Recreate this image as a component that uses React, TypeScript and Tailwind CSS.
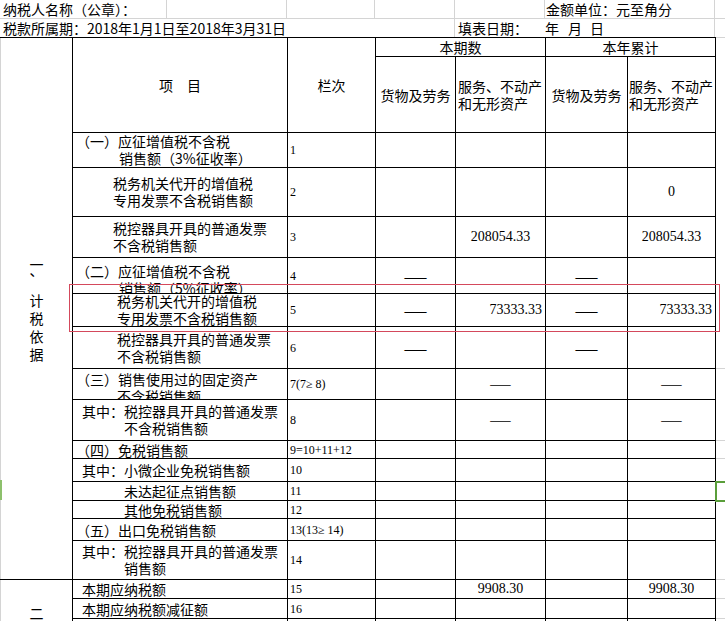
import React from "react"

const cjk = "font-['Noto_Sans_CJK_SC',sans-serif]"
const num = "font-['Liberation_Serif','Noto_Sans_CJK_SC',serif]"
const cell = "border border-black p-0 align-middle"

type Val = { t: string; kind: "num" | "right" | "dash" | "dash2" }

type Row = {
  h: string
  lines: [string, string][]
  box?: string
  no: string
  d?: Val
  e?: Val
  f?: Val
  g?: Val
  grid?: boolean
}

const dash: Val = { t: "——", kind: "dash" }
const dash2: Val = { t: "——", kind: "dash2" }

const rows: Row[] = [
  { h: "h-[35px]", lines: [["（一）应征增值税不含税", "pl-[3px]"], ["销售额（3%征收率）", "pl-[46px]"]], no: "1" },
  { h: "h-[49px]", lines: [["税务机关代开的增值税", "pl-[40px]"], ["专用发票不含税销售额", "pl-[40px]"]], no: "2", g: { t: "0", kind: "num" } },
  { h: "h-[41px]", lines: [["税控器具开具的普通发票", "pl-[40px]"], ["不含税销售额", "pl-[40px]"]], no: "3", e: { t: "208054.33", kind: "num" }, g: { t: "208054.33", kind: "num" } },
  { h: "h-[36px]", box: "h-[34px] pt-[4px] overflow-hidden", lines: [["（二）应征增值税不含税", "pl-[3px]"], ["销售额（5%征收率）", "pl-[46px]"]], no: "4", d: dash, f: dash },
  { h: "h-[33px]", box: "h-[31px] flex flex-col justify-center", lines: [["税务机关代开的增值税", "pl-[44px]"], ["专用发票不含税销售额", "pl-[44px]"]], no: "5", d: dash, e: { t: "73333.33", kind: "right" }, f: dash, g: { t: "73333.33", kind: "right" } },
  { h: "h-[42px]", lines: [["税控器具开具的普通发票", "pl-[44px]"], ["不含税销售额", "pl-[44px]"]], no: "6", d: dash, f: dash, grid: true },
  { h: "h-[31px]", box: "h-[29px] pt-[1px] overflow-hidden", lines: [["（三）销售使用过的固定资产", "pl-[3px]"], ["不含税销售额", "pl-[44px]"]], no: "7(7≥ 8)", e: dash2, g: dash2 },
  { h: "h-[41px]", lines: [["其中：税控器具开具的普通发票", "pl-[9px]"], ["不含税销售额", "pl-[51px]"]], no: "8", e: dash2, g: dash2, grid: true },
  { h: "h-[18px]", lines: [["（四）免税销售额", "pl-[3px]"]], no: "9=10+11+12", grid: true },
  { h: "h-[23px]", lines: [["其中：小微企业免税销售额", "pl-[9px]"]], no: "10" },
  { h: "h-[19px]", lines: [["未达起征点销售额", "pl-[51px]"]], no: "11" },
  { h: "h-[18px]", lines: [["其他免税销售额", "pl-[51px]"]], no: "12" },
  { h: "h-[22px]", lines: [["（五）出口免税销售额", "pl-[3px]"]], no: "13(13≥ 14)" },
  { h: "h-[39px]", lines: [["其中：税控器具开具的普通发票", "pl-[9px]"], ["销售额", "pl-[51px]"]], no: "14", grid: true },
]

const tail: Row[] = [
  { h: "h-[19px]", lines: [["本期应纳税额", "pl-[9px]"]], no: "15", e: { t: "9908.30", kind: "num" }, g: { t: "9908.30", kind: "num" }, grid: true },
  { h: "h-[20px]", lines: [["本期应纳税额减征额", "pl-[9px]"]], no: "16", grid: true },
  { h: "h-[21px]", lines: [], no: "" },
]

function ValueCell({ v }: { v?: Val }) {
  if (!v) return <td className={cell}></td>
  if (v.kind === "dash") return <td className={`${cell} text-center`}>——</td>
  if (v.kind === "dash2")
    return <td className={`${cell} text-center text-[13px] tracking-[2px] pl-[2px]`}>——</td>
  return (
    <td className={`${cell} ${num} text-[14px] ${v.kind === "right" ? "text-right pr-[3px]" : "text-center"}`}>
      {v.t}
    </td>
  )
}

function DataCells({ r }: { r: Row }) {
  const two = r.lines.length > 1
  return (
    <>
      <td className={cell}>
        <div className={`${r.box ?? ""} ${two ? "leading-[17px]" : ""} whitespace-nowrap`}>
          {r.lines.map(([t, pl], i) => (
            <div key={i} className={pl}>{t}</div>
          ))}
        </div>
      </td>
      <td className={`${cell} ${num} text-[12px] pl-[2px] whitespace-nowrap`}>{r.no}</td>
      <ValueCell v={r.d} />
      <ValueCell v={r.e} />
      <ValueCell v={r.f} />
      <ValueCell v={r.g} />
      <td className={`p-0 ${r.grid ? "border-b border-b-[#d4d4d4]" : ""}`}></td>
    </>
  )
}

export default function App() {
  const side = ["一", "、", "计", "税", "依", "据"]
  return (
    <div className={`relative w-[725px] h-[621px] overflow-hidden bg-white text-black text-[14px] ${cjk}`}>
      <div className="flex h-[19px] border-b border-[#d4d4d4] leading-[16px]">
        <div className="w-[167px] shrink-0 border-r border-[#d4d4d4] flex items-center pl-[3px] whitespace-nowrap">纳税人名称（公章）：</div>
        <div className="w-[120px] shrink-0 border-r border-[#d4d4d4]"></div>
        <div className="w-[88px] shrink-0 border-r border-[#d4d4d4]"></div>
        <div className="w-[80px] shrink-0 border-r border-[#d4d4d4]"></div>
        <div className="w-[90px] shrink-0 border-r border-[#d4d4d4]"></div>
        <div className="w-[170px] shrink-0 border-r border-[#d4d4d4] flex items-center pl-[1px] whitespace-nowrap">金额单位：元至角分</div>
        <div className="flex-1"></div>
      </div>
      <div className="flex h-[18px] leading-[16px]">
        <div className="w-[455px] shrink-0 border-r border-[#d4d4d4] flex items-center pl-[3px] whitespace-nowrap">税款所属期：2018年1月1日至2018年3月31日</div>
        <div className="w-[260px] shrink-0 border-r border-[#d4d4d4] flex items-center pl-[3px] whitespace-nowrap">
          <span>填表日期：</span>
          <span className="ml-[17px]">年</span>
          <span className="ml-[9px]">月</span>
          <span className="ml-[8px]">日</span>
        </div>
        <div className="flex-1"></div>
      </div>

      <table className="border-collapse table-fixed w-[755px] leading-[16px]">
        <colgroup>
          <col className="w-[72px]" />
          <col className="w-[215px]" />
          <col className="w-[88px]" />
          <col className="w-[80px]" />
          <col className="w-[90px]" />
          <col className="w-[82px]" />
          <col className="w-[88px]" />
          <col className="w-[40px]" />
        </colgroup>
        <tbody>
          <tr className="h-[19px]">
            <td rowSpan={16} className={`${cell} border-l-[#d4d4d4]`}>
              <div className="flex flex-col items-center">
                {side.map((c, i) => (
                  <span key={i} className="block h-[18px] leading-[18px]">
                    {c === "、" ? <span className="inline-block -translate-y-[12px]">{c}</span> : c}
                  </span>
                ))}
              </div>
            </td>
            <td rowSpan={2} className={`${cell} text-center`}>项　目</td>
            <td rowSpan={2} className={`${cell} text-center`}>栏次</td>
            <td colSpan={2} className={`${cell} text-center`}>本期数</td>
            <td colSpan={2} className={`${cell} text-center`}>本年累计</td>
            <td className="p-0 border-t border-t-[#d4d4d4]"></td>
          </tr>
          <tr className="h-[76px]">
            <td className={`${cell} text-center whitespace-nowrap`}>货物及劳务</td>
            <td className={`${cell} pl-[2px] leading-[17px]`}>服务、不动产<br />和无形资产</td>
            <td className={`${cell} text-center whitespace-nowrap`}>货物及劳务</td>
            <td className={`${cell} pl-[1px] leading-[17px]`}>服务、不动产<br />和无形资产</td>
            <td className="p-0"></td>
          </tr>
          {rows.map((r, i) => (
            <tr key={i} className={r.h}>
              <DataCells r={r} />
            </tr>
          ))}
          {tail.map((r, i) => (
            <tr key={"t" + i} className={r.h}>
              {i === 0 && (
                <td rowSpan={3} className={`${cell} border-l-[#d4d4d4] align-top`}>
                  <div className="flex flex-col items-center pt-[24px]">
                    <span className="block h-[18px] leading-[18px]">二</span>
                  </div>
                </td>
              )}
              <DataCells r={r} />
            </tr>
          ))}
        </tbody>
      </table>

      <div className="absolute left-[69px] top-[284px] w-[651px] h-[48px] border border-[#d4495c] pointer-events-none"></div>
      <div className="absolute left-[715px] top-[481px] w-[20px] h-[21px] border-2 border-[#5a9e3a] pointer-events-none"></div>
      <div className="absolute left-0 top-[480px] w-[2px] h-[20px] bg-[#8dc06c]"></div>
    </div>
  )
}
